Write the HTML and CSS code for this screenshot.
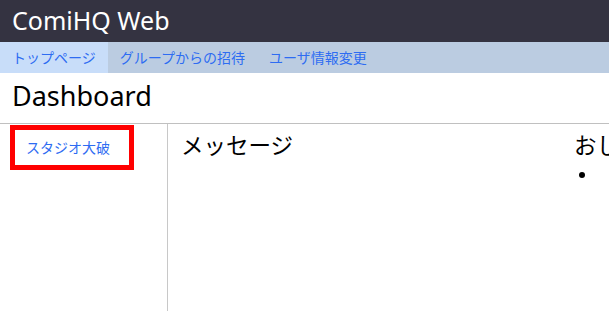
FILE: index.html
```html
<!DOCTYPE html>
<html lang="ja">
<head>
<meta charset="utf-8">
<title>ComiHQ Web</title>
<link rel="stylesheet" href="styles.css">
</head>
<body>
<header class="topbar">ComiHQ Web</header>
<nav class="tabs">
  <a class="tab active" href="#">トップページ</a>
  <a class="tab" href="#">グループからの招待</a>
  <a class="tab" href="#">ユーザ情報変更</a>
</nav>
<h1 class="page-title">Dashboard</h1>
<div class="layout">
  <aside class="sidebar">
    <a class="studio" href="#">スタジオ大破</a>
  </aside>
  <main class="content">
    <section class="messages">
      <h2 class="section-title">メッセージ</h2>
    </section>
    <section class="notices">
      <h2 class="section-title">おしらせ</h2>
      <ul class="notice-list"><li>&#8203;</li></ul>
    </section>
  </main>
</div>
</body>
</html>
```
FILE: styles.css
```css
html, body {
  margin: 0;
  padding: 0;
  background: #fff;
  font-family: "Noto Sans", "Noto Sans CJK JP", sans-serif;
  overflow: hidden;
}
.topbar {
  height: 42px;
  box-sizing: border-box;
  background: #343341;
  color: #fff;
  font-size: 25px;
  line-height: 40px;
  padding-left: 12px;
}
.tabs {
  display: flex;
  height: 31px;
  background: #bbcce1;
}
.tab {
  display: block;
  padding: 0 12px;
  line-height: 31px;
  font-size: 14px;
  color: #2e6cf2;
  text-decoration: none;
  font-family: "Noto Sans CJK JP", sans-serif;
}
.tab.active {
  background: #c8ddf9;
}
.page-title {
  margin: 0;
  height: 51px;
  box-sizing: border-box;
  font-weight: normal;
  font-size: 27px;
  line-height: 46px;
  padding-left: 12px;
  border-bottom: 1px solid #c0c0c0;
  color: #000;
}
.layout {
  display: grid;
  grid-template-columns: 168px 1fr;
  height: 187px;
}
.sidebar {
  border-right: 1px solid #c8c8c8;
  padding: 1px 0 0 10px;
}
.studio {
  display: block;
  width: 124px;
  height: 45px;
  box-sizing: border-box;
  border: 5px solid #ff0000;
  padding-left: 11px;
  line-height: 35px;
  font-size: 14px;
  color: #2e6cf2;
  text-decoration: none;
  font-family: "Noto Sans CJK JP", sans-serif;
}
.content {
  display: grid;
  grid-template-columns: 393px 300px;
  padding-left: 13px;
  font-family: "Noto Sans CJK JP", sans-serif;
}
.section-title {
  margin: 0;
  font-weight: normal;
  font-size: 22.5px;
  line-height: 40px;
  white-space: nowrap;
}
.notice-list {
  margin: 0;
  padding-left: 24px;
  font-size: 16px;
  line-height: 20px;
}
```
